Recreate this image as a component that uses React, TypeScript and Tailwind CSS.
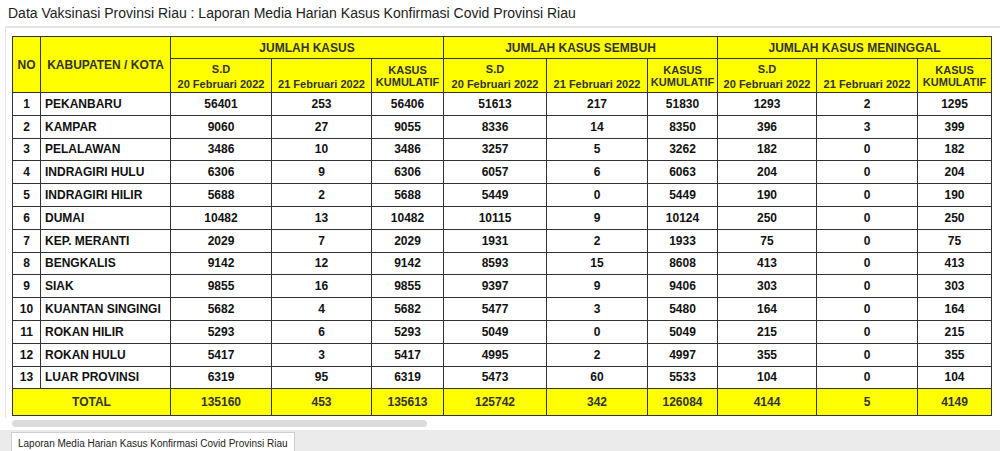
const rows: [string, number[]][] = [
  ['PEKANBARU', [56401, 253, 56406, 51613, 217, 51830, 1293, 2, 1295]],
  ['KAMPAR', [9060, 27, 9055, 8336, 14, 8350, 396, 3, 399]],
  ['PELALAWAN', [3486, 10, 3486, 3257, 5, 3262, 182, 0, 182]],
  ['INDRAGIRI HULU', [6306, 9, 6306, 6057, 6, 6063, 204, 0, 204]],
  ['INDRAGIRI HILIR', [5688, 2, 5688, 5449, 0, 5449, 190, 0, 190]],
  ['DUMAI', [10482, 13, 10482, 10115, 9, 10124, 250, 0, 250]],
  ['KEP. MERANTI', [2029, 7, 2029, 1931, 2, 1933, 75, 0, 75]],
  ['BENGKALIS', [9142, 12, 9142, 8593, 15, 8608, 413, 0, 413]],
  ['SIAK', [9855, 16, 9855, 9397, 9, 9406, 303, 0, 303]],
  ['KUANTAN SINGINGI', [5682, 4, 5682, 5477, 3, 5480, 164, 0, 164]],
  ['ROKAN HILIR', [5293, 6, 5293, 5049, 0, 5049, 215, 0, 215]],
  ['ROKAN HULU', [5417, 3, 5417, 4995, 2, 4997, 355, 0, 355]],
  ['LUAR PROVINSI', [6319, 95, 6319, 5473, 60, 5533, 104, 0, 104]],
]

const totals = [135160, 453, 135613, 125742, 342, 126084, 4144, 5, 4149]

const widths = [28, 130, 101, 100, 72, 103, 101, 70, 99, 101, 74]

const cell = 'border border-[#333]'

function SubHeads() {
  return (
    <>
      <th className={`${cell} pt-[2px] text-[11px] leading-[15px]`}>
        S.D
        <br />
        20 Februari 2022
      </th>
      <th className={`${cell} pt-[2px] text-[11px] leading-[15px]`}>
        &nbsp;
        <br />
        21 Februari 2022
      </th>
      <th className={`${cell} text-[11px] leading-[12px]`}>
        KASUS
        <br />
        KUMULATIF
      </th>
    </>
  )
}

export default function App() {
  return (
    <div className="h-[451px] w-[1000px] overflow-hidden bg-white font-['Liberation_Sans',Arial,sans-serif]">
      <div className="h-[26px] px-2 pt-[5px] text-[14px] leading-[17px] text-[#222]">
        Data Vaksinasi Provinsi Riau : Laporan Media Harian Kasus Konfirmasi Covid Provinsi Riau
      </div>

      <div className="ml-[5px] h-[392px] border-l border-t-2 border-[#e4e4e4] pl-[6px] pt-[8px]">
        <table className="w-[979px] table-fixed border-collapse">
          <colgroup>
            {widths.map((w, i) => (
              <col key={i} style={{ width: w }} />
            ))}
          </colgroup>
          <thead className="bg-[#ffff00] font-bold text-[#333]">
            <tr className="h-[22px] text-[12px]">
              <th rowSpan={2} className={cell}>NO</th>
              <th rowSpan={2} className={cell}>KABUPATEN / KOTA</th>
              <th colSpan={3} className={cell}>JUMLAH KASUS</th>
              <th colSpan={3} className={cell}>JUMLAH KASUS SEMBUH</th>
              <th colSpan={3} className={cell}>JUMLAH KASUS MENINGGAL</th>
            </tr>
            <tr className="h-[34px]">
              <SubHeads />
              <SubHeads />
              <SubHeads />
            </tr>
          </thead>
          <tbody className="text-[12px] font-bold text-[#111]">
            {rows.map(([name, vals], i) => (
              <tr key={name} className="h-[22.8px]">
                <td className={`${cell} text-center`}>{i + 1}</td>
                <td className={`${cell} pl-[4px]`}>{name}</td>
                {vals.map((v, j) => (
                  <td key={j} className={`${cell} text-center`}>{v}</td>
                ))}
              </tr>
            ))}
            <tr className="h-[27px] bg-[#ffff00] text-[#333]">
              <td colSpan={2} className={`${cell} text-center`}>TOTAL</td>
              {totals.map((v, j) => (
                <td key={j} className={`${cell} text-center`}>{v}</td>
              ))}
            </tr>
          </tbody>
        </table>
      </div>

      <div className="mt-[2px] ml-[12px] h-[7px] w-[415px] rounded-full bg-[#dcdcdc]" />

      <div className="mt-[3px] h-[21px] bg-[#ebebeb] pl-[11px]">
        <div className="inline-block h-[21px] border border-b-0 border-[#cfcfcf] bg-white px-[6px] pt-[4px] text-[10px] leading-[13px] text-[#222]">
          Laporan Media Harian Kasus Konfirmasi Covid Provinsi Riau
        </div>
      </div>
    </div>
  )
}
